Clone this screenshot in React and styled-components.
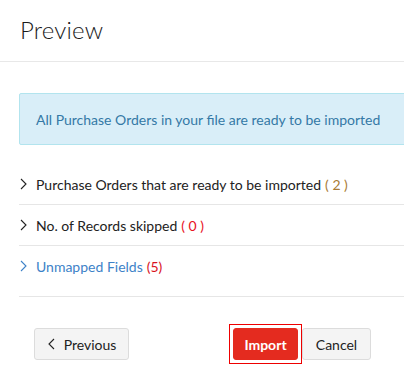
import React from "react";
import styled, { createGlobalStyle } from "styled-components";

const GlobalStyle = createGlobalStyle`
  html, body {
    margin: 0;
    padding: 0;
    background: #fff;
    overflow: hidden;
  }
  body {
    font-family: "Lato", "Liberation Sans", sans-serif;
    color: #222;
  }
`;

const Page = styled.div`
  width: 404px;
  height: 380px;
  overflow: hidden;
  background: #fff;
`;

const Header = styled.div`
  height: 62px;
  padding-left: 20px;
  display: flex;
  align-items: center;
  border-bottom: 1px solid #e8e8e8;
  box-sizing: border-box;
`;

const Title = styled.h1`
  margin: 0;
  font-family: "Lato", sans-serif;
  font-weight: 300;
  font-size: 24px;
  letter-spacing: 0.2px;
  color: #1a1a1a;
  padding-bottom: 2px;
`;

const Body = styled.div`
  padding: 31px 0 0 19px;
  width: 460px;
`;

const Alert = styled.div`
  height: 52px;
  box-sizing: border-box;
  display: flex;
  align-items: center;
  padding-left: 16px;
  background: #d9eef8;
  border: 1px solid #b2e4ee;
  border-radius: 2px;
  color: #3479a6;
  font-size: 14px;
`;

const List = styled.div`
  margin-top: 19px;
`;

const Row = styled.div`
  display: flex;
  align-items: center;
  height: ${(p) => (p.$tall ? "51px" : "41px")};
  padding-bottom: ${(p) => (p.$tall ? "10px" : "0")};
  box-sizing: border-box;
  border-bottom: 1px solid #e6e6e6;
  font-size: 14px;
  color: ${(p) => (p.$link ? "#3d82c8" : "#222")};
`;

const Chevron = styled.svg`
  width: 7px;
  height: 12px;
  margin: 0 9px 0 1px;
  flex-shrink: 0;
`;

const Count = styled.span`
  color: ${(p) => p.$color};
  margin-left: 4px;
`;

const Footer = styled.div`
  display: flex;
  align-items: center;
  padding: 0 33px 0 34px;
  margin-top: 27px;
`;

const Button = styled.button`
  font-family: "Lato", "Liberation Sans", sans-serif;
  font-size: 14px;
  height: 32px;
  box-sizing: border-box;
  border-radius: 3px;
  border: 1px solid ${(p) => (p.$primary ? "#e42b1f" : "#dcdcdc")};
  background: ${(p) => (p.$primary ? "#e42b1f" : "#f4f4f4")};
  color: ${(p) => (p.$primary ? "#fff" : "#222")};
  font-weight: ${(p) => (p.$primary ? 700 : 400)};
  padding: 0;
  width: ${(p) => p.$w}px;
  display: flex;
  align-items: center;
  justify-content: center;
  cursor: pointer;
`;

const FocusRing = styled.div`
  padding: 3px;
  border: 1px solid #e00;
  display: flex;
`;

const Spacer = styled.div`
  flex: 1;
`;

const ChevronIcon = ({ color = "#222", left }) => (
  <Chevron viewBox="0 0 7 12">
    <path
      d={left ? "M6 1 L1 6 L6 11" : "M1 1 L6 6 L1 11"}
      fill="none"
      stroke={color}
      strokeWidth="1.1"
    />
  </Chevron>
);

function App() {
  return (
    <Page>
      <GlobalStyle />
      <Header>
        <Title>Preview</Title>
      </Header>
      <Body>
        <Alert>All Purchase Orders in your file are ready to be imported</Alert>
        <List>
          <Row>
            <ChevronIcon />
            Purchase Orders that are ready to be imported
            <Count $color="#a97b35">( 2 )</Count>
          </Row>
          <Row>
            <ChevronIcon />
            No. of Records skipped
            <Count $color="#e8121e">( 0 )</Count>
          </Row>
          <Row $tall $link>
            <ChevronIcon color="#3d82c8" />
            Unmapped Fields
            <Count $color="#d9121e">(5)</Count>
          </Row>
        </List>
      </Body>
      <Footer>
        <Button $w={95}>
          <ChevronIcon left />
          Previous
        </Button>
        <Spacer />
        <FocusRing>
          <Button $primary $w={65}>Import</Button>
        </FocusRing>
        <Button $w={69}>Cancel</Button>
      </Footer>
    </Page>
  );
}

export default App;
